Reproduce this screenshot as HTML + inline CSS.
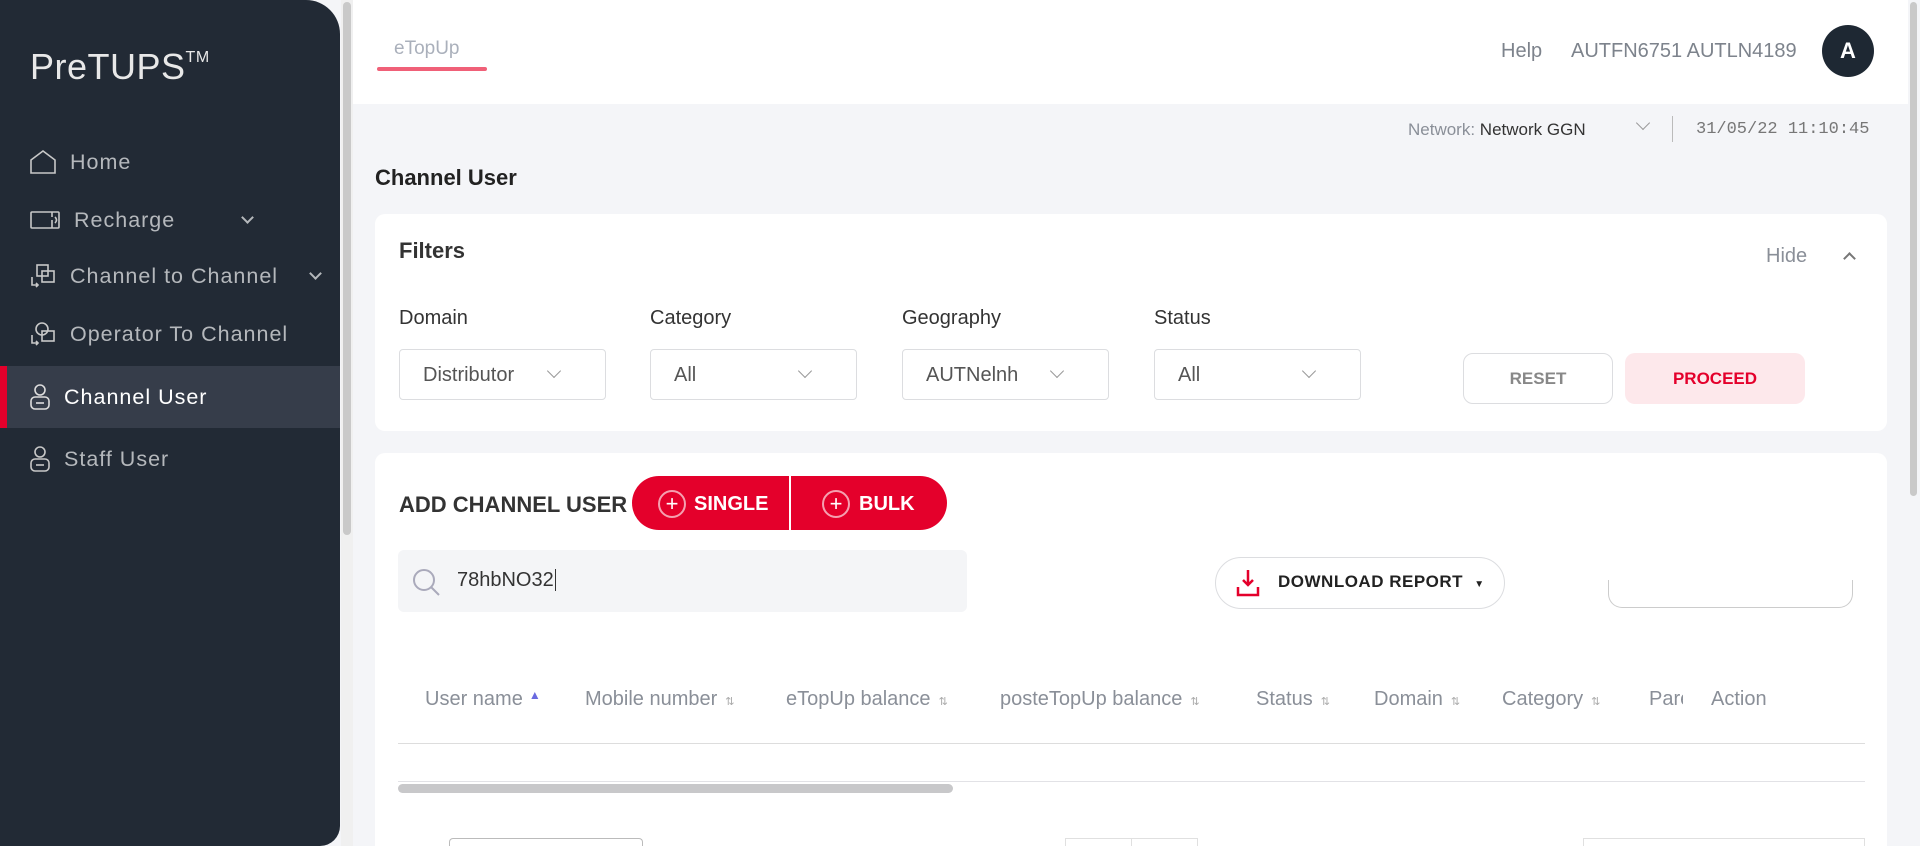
<!DOCTYPE html>
<html style="overflow:hidden;width:1920px;height:846px"><head><meta charset="utf-8"><style>
*{box-sizing:border-box;margin:0;padding:0}
body{width:1920px;height:846px;overflow:hidden;background:#f4f5f8;font-family:"Liberation Sans",sans-serif;position:relative}
.abs{position:absolute}
#side{left:0;top:0;width:340px;height:846px;background:#222a35;border-top-right-radius:34px;border-bottom-right-radius:20px}
.logo{left:30px;top:46px;color:#e8e8e8;font-size:36px;letter-spacing:0.5px}
.logo sup{font-size:16px;position:relative;top:-4px}
.mi{left:0;width:340px;height:62px;color:#b5b8bc;font-size:21.5px;letter-spacing:1px;display:flex;align-items:center}
.mi svg{margin-left:30px;margin-right:14px}
.act{background:#363d4a;color:#fff;border-left:7px solid #e4002b}
.act svg{margin-left:23px}
.chev{position:absolute;width:9px;height:9px;border-right:2px solid #b5b8bc;border-bottom:2px solid #b5b8bc;transform:rotate(45deg)}
.card{background:#fff;border-radius:10px}
.lbl{font-size:20px;color:#333}
.sel{height:51px;width:207px;border:1px solid #dcdde0;border-radius:4px;background:#fff;color:#555;font-size:20px;padding:14px 0 0 23px}
.sel:after{content:"";position:absolute;right:46px;top:16px;width:9px;height:9px;border-right:1.5px solid #999;border-bottom:1.5px solid #999;transform:rotate(45deg)}
.th{top:688px;font-size:20px;color:#8a8f98}
.srt{font-size:11px;color:#aaa;margin-left:8px}
</style></head><body>
<div id="side" class="abs">
<div class="abs logo">PreTUPS<sup>TM</sup></div>
<div class="abs mi" style="top:131px"><svg width="26" height="26" viewBox="0 0 26 26" fill="none" stroke="#c8c8c8" stroke-width="1.6"><path d="M1 11 L13 2 L25 11 V24 H1 Z"/></svg>Home</div>
<div class="abs mi" style="top:189px"><svg width="30" height="20" viewBox="0 0 30 20" fill="none" stroke="#c8c8c8" stroke-width="1.6"><rect x="1" y="2" width="28" height="16" rx="1"/><path d="M22 2 V7 M22 10 V18 M25 7 q3 3 0 6"/></svg>Recharge<span class="chev" style="left:243px;top:24px"></span></div>
<div class="abs mi" style="top:245px"><svg width="26" height="26" viewBox="0 0 26 26" fill="none" stroke="#c8c8c8" stroke-width="1.6"><rect x="7" y="2" width="11" height="11"/><rect x="12" y="8" width="12" height="11"/><path d="M2 14 V22 H8 M6 20 l2 2 -2 2"/></svg>Channel to Channel<span class="chev" style="left:311px;top:24px"></span></div>
<div class="abs mi" style="top:303px"><svg width="26" height="26" viewBox="0 0 26 26" fill="none" stroke="#c8c8c8" stroke-width="1.6"><circle cx="12" cy="8" r="6"/><rect x="12" y="10" width="12" height="10"/><path d="M2 14 V22 H8 M6 20 l2 2 -2 2"/></svg>Operator To Channel</div>
<div class="abs mi act" style="top:366px;height:62px"><svg width="20" height="26" viewBox="0 0 20 26" fill="none" stroke="#ddd" stroke-width="1.6"><circle cx="10" cy="6" r="5"/><rect x="1" y="13" width="18" height="12" rx="4"/><path d="M6 19 H14"/></svg>Channel User</div>
<div class="abs mi" style="top:428px"><svg width="20" height="26" viewBox="0 0 20 26" fill="none" stroke="#c8c8c8" stroke-width="1.6"><circle cx="10" cy="6" r="5"/><rect x="1" y="13" width="18" height="12" rx="4"/><path d="M6 19 H14"/></svg>Staff User</div>
</div>
<div class="abs" style="left:341px;top:0;width:12px;height:846px;background:#f0f0f0"></div>
<div class="abs" style="left:343px;top:2px;width:8px;height:533px;background:#c9c9c9;border-radius:4px"></div>
<div class="abs" style="left:353px;top:0;width:1557px;height:104px;background:#fff"></div>
<div class="abs" style="left:394px;top:38px;font-size:19px;color:#aab0bb">eTopUp</div>
<div class="abs" style="left:377px;top:67px;width:110px;height:4px;background:#f06078;border-radius:2px"></div>
<div class="abs" style="left:1501px;top:40px;font-size:20px;color:#7d838c">Help</div>
<div class="abs" style="left:1571px;top:40px;font-size:20px;color:#7d838c">AUTFN6751 AUTLN4189</div>
<div class="abs" style="left:1822px;top:25px;width:52px;height:52px;border-radius:50%;background:#1e2833;color:#fff;font-size:22px;font-weight:bold;text-align:center;line-height:52px">A</div>
<div class="abs" style="left:1408px;top:120px;font-size:17px;color:#8a8f98">Network: <span style="color:#333">Network GGN</span></div>
<div class="abs" style="left:1638px;top:118px;width:10px;height:10px;border-right:1.5px solid #999;border-bottom:1.5px solid #999;transform:rotate(45deg)"></div>
<div class="abs" style="left:1672px;top:116px;width:1px;height:26px;background:#bbb"></div>
<div class="abs" style="left:1696px;top:120px;font-size:17px;color:#777;font-family:'Liberation Mono',monospace">31/05/22 11:10:45</div>
<div class="abs" style="left:375px;top:165px;font-size:22px;font-weight:bold;color:#222">Channel User</div>
<div class="abs card" style="left:375px;top:214px;width:1512px;height:217px"></div>
<div class="abs" style="left:399px;top:238px;font-size:22px;font-weight:bold;color:#333">Filters</div>
<div class="abs" style="left:1766px;top:245px;font-size:20px;color:#8a8f98">Hide</div>
<div class="abs" style="left:1845px;top:254px;width:9px;height:9px;border-left:2px solid #777;border-top:2px solid #777;transform:rotate(45deg)"></div>
<div class="abs lbl" style="left:399px;top:307px">Domain</div>
<div class="abs lbl" style="left:650px;top:307px">Category</div>
<div class="abs lbl" style="left:902px;top:307px">Geography</div>
<div class="abs lbl" style="left:1154px;top:307px">Status</div>
<div class="abs sel" style="left:399px;top:349px">Distributor</div>
<div class="abs sel" style="left:650px;top:349px">All</div>
<div class="abs sel" style="left:902px;top:349px">AUTNelnh</div>
<div class="abs sel" style="left:1154px;top:349px">All</div>
<div class="abs" style="left:1463px;top:353px;width:150px;height:51px;border:1px solid #dcdde0;border-radius:10px;color:#888;font-size:17px;font-weight:bold;text-align:center;line-height:49px">RESET</div>
<div class="abs" style="left:1625px;top:353px;width:180px;height:51px;background:#fde8eb;border-radius:10px;color:#e4002b;font-size:17px;font-weight:bold;text-align:center;line-height:51px">PROCEED</div>
<div class="abs card" style="left:375px;top:453px;width:1512px;height:393px;border-bottom-left-radius:0;border-bottom-right-radius:0"></div>
<div class="abs" style="left:399px;top:492px;font-size:22px;font-weight:bold;color:#333">ADD CHANNEL USER</div>
<div class="abs" style="left:632px;top:476px;width:315px;height:54px;background:#e4002b;border-radius:27px"></div>
<div class="abs" style="left:789px;top:476px;width:2px;height:54px;background:#fff"></div>
<div class="abs" style="left:658px;top:490px;width:28px;height:28px;border:2px solid #f5a0b0;border-radius:50%;color:#fff;text-align:center;line-height:23px;font-size:22px">+</div>
<div class="abs" style="left:694px;top:493px;color:#fff;font-size:20px;font-weight:bold">SINGLE</div>
<div class="abs" style="left:822px;top:490px;width:28px;height:28px;border:2px solid #f5a0b0;border-radius:50%;color:#fff;text-align:center;line-height:23px;font-size:22px">+</div>
<div class="abs" style="left:859px;top:493px;color:#fff;font-size:20px;font-weight:bold">BULK</div>
<div class="abs" style="left:398px;top:550px;width:569px;height:62px;background:#f4f5f7;border-radius:6px"></div>
<svg class="abs" style="left:411px;top:567px" width="32" height="32" viewBox="0 0 32 32" fill="none" stroke="#aab" stroke-width="2"><circle cx="13" cy="13" r="10"/><path d="M20 20 L28 28"/></svg>
<div class="abs" style="left:457px;top:569px;font-size:20px;color:#333">78hbNO32<span style="border-left:1px solid #333;margin-left:1px"></span></div>
<div class="abs" style="left:1215px;top:557px;width:290px;height:52px;border:1px solid #dcdde0;border-radius:26px;background:#fff"></div>
<svg class="abs" style="left:1236px;top:569px" width="24" height="28" viewBox="0 0 24 28" fill="none" stroke="#e4002b" stroke-width="2.5"><path d="M12 1 V16 M7 11 L12 16 L17 11 M2 18 V26 H22 V18"/></svg>
<div class="abs" style="left:1278px;top:572px;font-size:17px;font-weight:bold;color:#222;letter-spacing:0.5px">DOWNLOAD REPORT <span style="font-size:10px;margin-left:6px">&#9660;</span></div>
<div class="abs" style="left:1608px;top:580px;width:245px;height:28px;border:1px solid #ccc;border-top:none;border-radius:0 0 14px 14px"></div>
<div class="abs th" style="left:425px">User name<span style="color:#6a6ae0;font-size:12px;margin-left:6px;vertical-align:top">&#9650;</span></div>
<div class="abs th" style="left:585px">Mobile number<span class="srt">⇅</span></div>
<div class="abs th" style="left:786px">eTopUp balance<span class="srt">⇅</span></div>
<div class="abs th" style="left:1000px">posteTopUp balance<span class="srt">⇅</span></div>
<div class="abs th" style="left:1256px">Status<span class="srt">⇅</span></div>
<div class="abs th" style="left:1374px">Domain<span class="srt">⇅</span></div>
<div class="abs th" style="left:1502px">Category<span class="srt">⇅</span></div>
<div class="abs th" style="left:1649px;width:34px;overflow:hidden">Parent</div>
<div class="abs th" style="left:1711px">Action</div>
<div class="abs" style="left:398px;top:743px;width:1467px;height:1px;background:#ddd"></div>
<div class="abs" style="left:398px;top:781px;width:1467px;height:1px;background:#e2e2e6"></div>
<div class="abs" style="left:398px;top:784px;width:555px;height:9px;background:#c8c8ca;border-radius:5px"></div>
<div class="abs" style="left:449px;top:838px;width:194px;height:8px;border:1px solid #bbb;border-bottom:none;border-radius:4px 4px 0 0"></div>
<div class="abs" style="left:1065px;top:838px;width:133px;height:8px;border:1px solid #e0e0e0;border-bottom:none"></div>
<div class="abs" style="left:1131px;top:838px;width:1px;height:8px;background:#e0e0e0"></div>
<div class="abs" style="left:1583px;top:838px;width:282px;height:8px;border:1px solid #e0e0e0;border-bottom:none"></div>
<div class="abs" style="left:1908px;top:0;width:12px;height:846px;background:#f4f5f8"></div>
<div class="abs" style="left:1910px;top:2px;width:7px;height:494px;background:#c9c9c9;border-radius:4px"></div>
</body></html>
